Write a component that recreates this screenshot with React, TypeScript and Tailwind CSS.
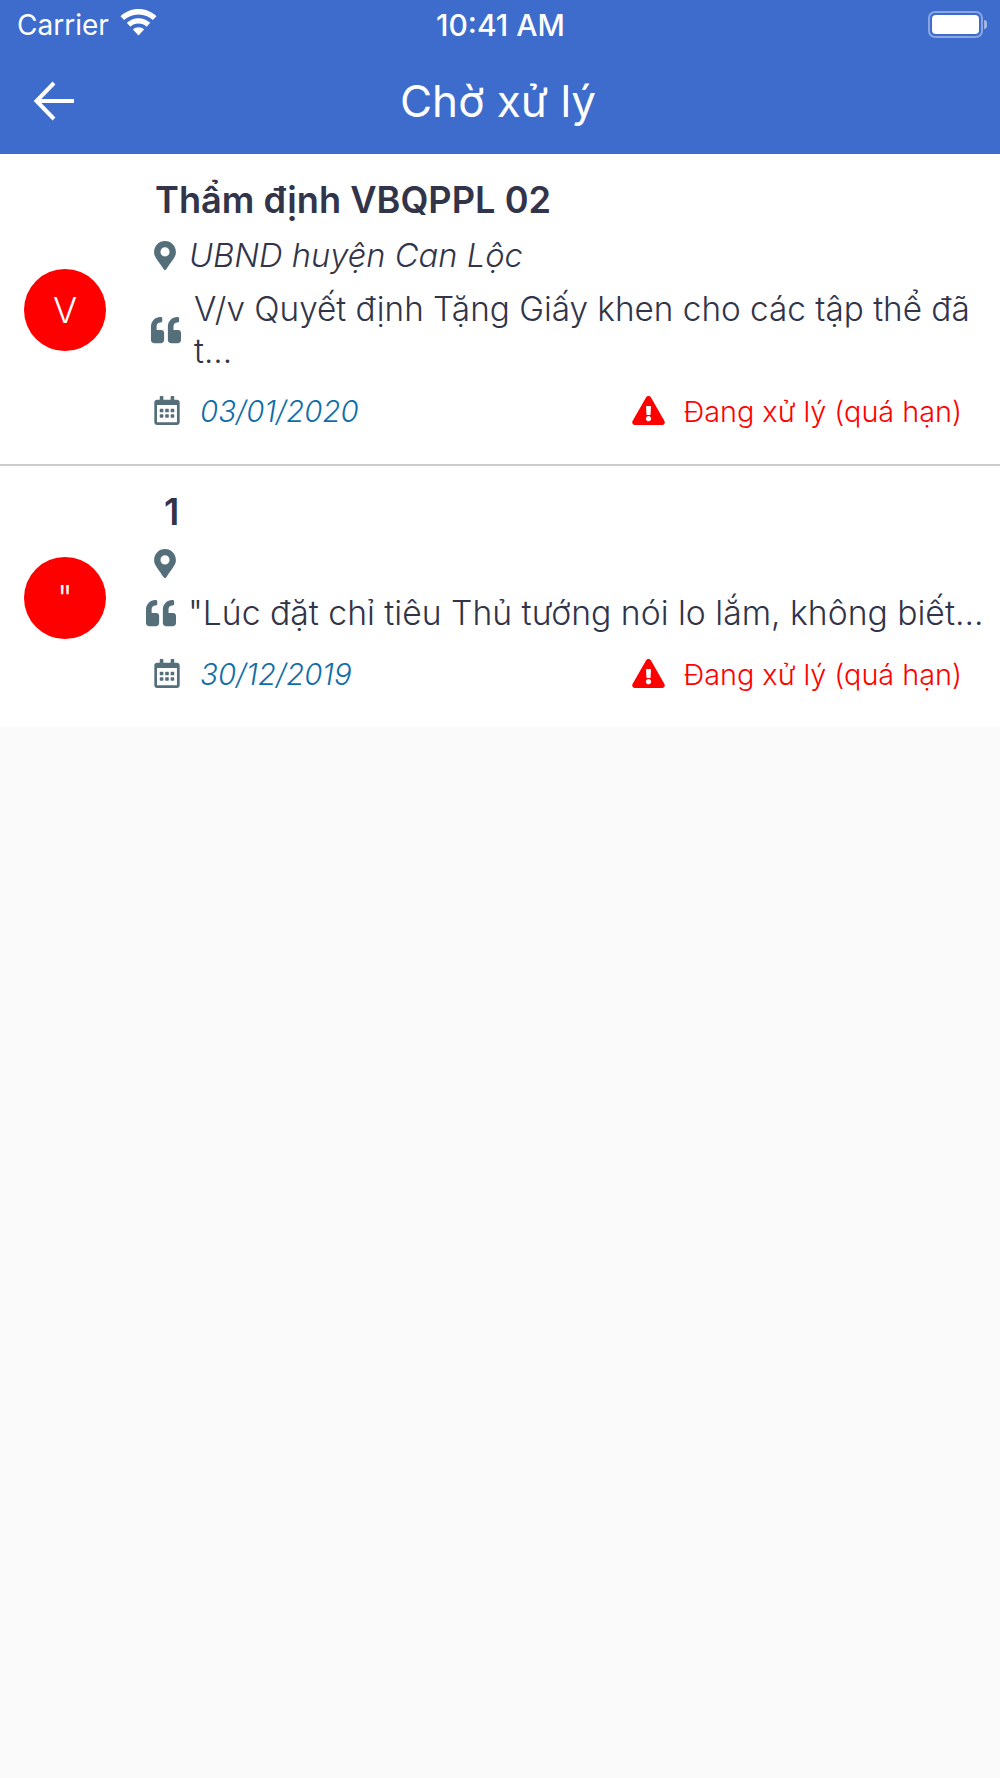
import React from 'react';
import { FaMapMarkerAlt, FaQuoteLeft, FaRegCalendarAlt, FaExclamationTriangle } from 'react-icons/fa';

const font = { fontFamily: 'Inter, "Liberation Sans", sans-serif' };

const WifiIcon = () => (
  <svg className="w-[37px] h-[27px] -mt-[6px]" viewBox="0 0 37 27" fill="currentColor">
    <path d="M18.5 0C11.5 0 5.2 2.7.5 7.2l3.6 3.9C7.8 7.5 12.9 5.4 18.5 5.4s10.7 2.1 14.4 5.7l3.6-3.9C31.8 2.7 25.5 0 18.5 0Z" />
    <path d="M18.5 9.2c-4.5 0-8.6 1.7-11.7 4.6l3.6 3.9c2.1-2 5-3.2 8.1-3.2s6 1.2 8.1 3.2l3.6-3.9c-3.1-2.9-7.2-4.6-11.7-4.6Z" />
    <path d="M18.5 18.3c-2.2 0-4.1.8-5.6 2.1l5.6 6.1 5.6-6.1c-1.5-1.3-3.4-2.1-5.6-2.1Z" />
  </svg>
);

const StatusBar = () => (
  <div className="relative h-[50px] flex items-center justify-between pl-[17px] pr-[13px] text-white">
    <div className="flex items-center gap-[11px]">
      <span className="text-[28px] leading-none">Carrier</span>
      <WifiIcon />
    </div>
    <span className="absolute left-[436px] top-[9px] text-[30px] leading-[32px] font-medium">10:41 AM</span>
    <div className="flex items-center -mt-[2px]">
      <div className="w-[55px] h-[27px] rounded-[7px] border-2 border-white/40 p-[2px]">
        <div className="w-full h-full rounded-[4px] bg-white" />
      </div>
      <div className="w-[3px] h-[9px] ml-[1px] rounded-r-full bg-white/50" />
    </div>
  </div>
);

const Header = () => (
  <div className="relative h-[104px] flex items-center justify-center text-white">
    <svg className="absolute left-[33px] top-[30px] w-[42px] h-[42px]" viewBox="0 0 42 42" fill="none" stroke="currentColor" strokeWidth="4">
      <path d="M41 21H4" />
      <path d="M21 3 3.5 21 21 39" />
    </svg>
    <h1 className="text-[44px] leading-[50px] -mt-[2px] ml-[-4px]">Chờ xử lý</h1>
  </div>
);

type DocRow = {
  letter: string;
  title: string;
  place: string;
  quote: string;
  date: string;
  rowClass: string;
  titleClass: string;
  placeClass: string;
  quoteClass: string;
  quoteText: string;
  dateClass: string;
};

const rows: DocRow[] = [
  {
    letter: 'V',
    title: 'Thẩm định VBQPPL 02',
    place: 'UBND huyện Can Lộc',
    quote: 'V/v Quyết định Tặng Giấy khen cho các tập thể đã t...',
    date: '03/01/2020',
    rowClass: 'pb-[32px]',
    titleClass: 'ml-[5px]',
    placeClass: 'h-[66px]',
    quoteClass: 'ml-[1px]',
    quoteText: 'w-[787px] ml-[13px] text-[33.3px]',
    dateClass: 'mt-[20px]',
  },
  {
    letter: '"',
    title: '1',
    place: '',
    quote: '"Lúc đặt chỉ tiêu Thủ tướng nói lo lắm, không biết...',
    date: '30/12/2019',
    rowClass: 'pb-[32px]',
    titleClass: 'ml-[14px]',
    placeClass: 'h-[58px]',
    quoteClass: '-ml-[4px]',
    quoteText: 'w-[800px] ml-[12px] text-[33.7px]',
    dateClass: 'mt-[21px]',
  },
];

const Row = ({ row }: { row: DocRow }) => (
  <div className={`flex items-center bg-white pl-[24px] pt-[24px] ${row.rowClass}`}>
    <div className="w-[82px] h-[82px] mt-[10px] shrink-0 rounded-full bg-[#ff0000] flex items-center justify-center text-white text-[36px] font-light leading-none">
      {row.letter}
    </div>
    <div className="ml-[44px] flex-1 text-[#32344a]">
      <div className={`text-[36.2px] leading-[44px] font-semibold ${row.titleClass}`}>{row.title}</div>
      <div className={`flex items-center ml-[4px] ${row.placeClass}`}>
        <FaMapMarkerAlt className="w-[22px] h-[29px] text-[#546e7a] shrink-0" />
        <span className="ml-[13px] text-[32.7px] leading-[40px] italic font-[350]">{row.place}</span>
      </div>
      <div className={`flex items-center ${row.quoteClass}`}>
        <FaQuoteLeft className="w-[30px] h-[30px] text-[#546e7a] shrink-0" />
        <p className={`leading-[42px] font-[350] ${row.quoteText}`}>{row.quote}</p>
      </div>
      <div className={`flex items-center justify-between pl-[4px] pr-[38px] ${row.dateClass}`}>
        <div className="flex items-center">
          <FaRegCalendarAlt className="w-[26px] h-[29px] -mt-[4px] text-[#546e7a]" />
          <span className="ml-[20px] text-[29.4px] leading-[40px] italic font-light text-[#0f6ea8]">{row.date}</span>
        </div>
        <div className="flex items-center text-[#ff0000]">
          <FaExclamationTriangle className="w-[33px] h-[29px] -mt-[4px]" />
          <span className="ml-[18px] text-[28.8px] leading-[40px] font-light">Đang xử lý (quá hạn)</span>
        </div>
      </div>
    </div>
  </div>
);

export default function App() {
  return (
    <div className="w-[1000px] h-[1778px] bg-[#fafafa] flex flex-col" style={font}>
      <div className="bg-[#3d6ccc]">
        <StatusBar />
        <Header />
      </div>
      <Row row={rows[0]} />
      <div className="h-[2px] bg-[#cccccc]" />
      <Row row={rows[1]} />
    </div>
  );
}
